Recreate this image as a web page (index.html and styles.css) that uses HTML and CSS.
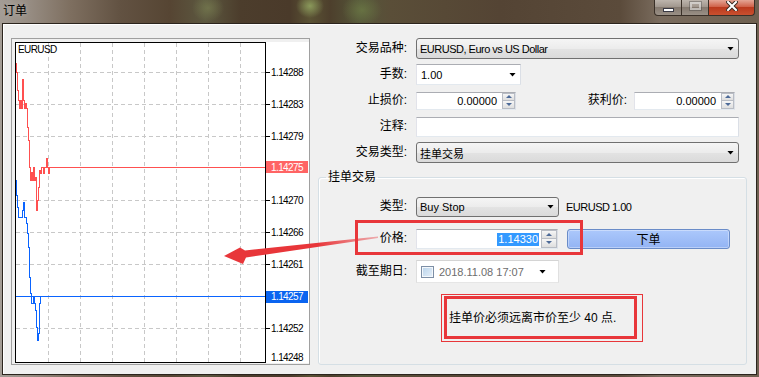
FILE: index.html
```html
<!DOCTYPE html>
<html lang="zh-CN">
<head>
  <meta charset="UTF-8">
  <title>订单</title>
  <link rel="stylesheet" href="styles.css">
</head>
<body>
<div class="window">
  <!-- 标题栏 -->
  <div class="titlebar">
    <span class="title">订单</span>
    <div class="controls">
      <span class="ctl ctl-min"><i></i></span>
      <span class="ctl ctl-max"><i></i></span>
      <span class="ctl ctl-close">
        <svg width="12" height="10" viewBox="0 0 12 10">
          <path d="M2 1 L10 9 M10 1 L2 9" stroke="#3a2a22" stroke-width="4" stroke-linecap="square"/>
          <path d="M2 1 L10 9 M10 1 L2 9" stroke="#fff" stroke-width="2" stroke-linecap="square"/>
        </svg>
      </span>
    </div>
  </div>

  <div class="client">
    <!-- 图表 -->
    <div class="chart-frame">
      <svg class="chart" viewBox="15 42 294 321" width="294" height="321" shape-rendering="crispEdges">
        <rect x="15" y="42" width="294" height="321" fill="#fff"/>
        <g class="grid" stroke="#c8c8c8" stroke-dasharray="4 3">
          <path d="M48.5 43V362 M80.5 43V362 M112.5 43V362 M144.5 43V362 M176.5 43V362 M208.5 43V362 M240.5 43V362"/>
          <path d="M16 72.5H265 M16 104.5H265 M16 136.5H265 M16 200.5H265 M16 232.5H265 M16 264.5H265 M16 328.5H265"/>
        </g>
        <rect x="15.5" y="42.5" width="250" height="320" fill="none" stroke="#000"/>
        <path d="M266 72.5h4 M266 104.5h4 M266 136.5h4 M266 167.5h4 M266 200.5h4 M266 232.5h4 M266 264.5h4 M266 296.5h4 M266 328.5h4" stroke="#000"/>

        <polyline fill="none" stroke="#ff5050" points="16.5,63 16.5,72.5 17.5,72.5 17.5,90.5 18.5,90.5 18.5,100.5 19.5,100.5 19.5,108.5 20.5,108.5 20.5,100.5 21.5,100.5 21.5,108.5 22.5,108.5 22.5,79.5 23.5,79.5 23.5,100.5 24.5,100.5 24.5,108.5 25.5,108.5 25.5,103.5 26.5,103.5 26.5,108.5 27.5,108.5 27.5,127.5 28.5,127.5 28.5,140.5 29.5,140.5 29.5,167.5 30.5,167.5 30.5,180.5 31.5,180.5 31.5,172.5 32.5,172.5 32.5,180.5 33.5,180.5 33.5,167.5 34.5,167.5 34.5,180.5 35.5,180.5 35.5,177.5 36.5,177.5 36.5,210.5 37.5,210.5 37.5,200.5 38.5,200.5 38.5,187.5 39.5,187.5 39.5,170.5 40.5,170.5 40.5,173.5 41.5,173.5 41.5,167.5 43.5,167.5 43.5,173.5 44.5,173.5 44.5,167.5 46.5,167.5 46.5,158.5 47.5,158.5 47.5,167.5 48.5,167.5 48.5,173.5 49.5,173.5 49.5,167.5"/>
        <rect x="49" y="167" width="216" height="1" fill="#ff5050"/>
        <polyline fill="none" stroke="#0a64ff" points="16.5,180 16.5,195.5 17.5,195.5 17.5,207.5 18.5,207.5 18.5,217.5 22.5,217.5 22.5,210.5 23.5,210.5 23.5,202.5 24.5,202.5 24.5,217.5 26.5,217.5 26.5,223.5 27.5,223.5 27.5,233.5 28.5,233.5 28.5,247.5 29.5,247.5 29.5,277.5 30.5,277.5 30.5,293.5 31.5,293.5 31.5,303.5 33.5,303.5 33.5,297.5 34.5,297.5 34.5,303.5 35.5,303.5 35.5,310.5 36.5,310.5 36.5,327.5 37.5,327.5 37.5,340.5 38.5,340.5 38.5,333.5 39.5,333.5 39.5,303.5 40.5,303.5 40.5,296.5"/>
        <rect x="16" y="296" width="249" height="1" fill="#0a64ff"/>

        <rect x="266" y="161" width="42" height="12" fill="#ff6464"/>
        <rect x="266" y="291" width="42" height="12" fill="#0a64f0"/>

        <g class="axis" font-family="Liberation Sans, sans-serif" font-size="10" letter-spacing="-0.6">
          <text x="18" y="53">EURUSD</text>
          <text x="271" y="76">1.14288</text>
          <text x="271" y="108">1.14283</text>
          <text x="271" y="140">1.14279</text>
          <text x="271" y="171" fill="#fff">1.14275</text>
          <text x="271" y="204">1.14270</text>
          <text x="271" y="236">1.14266</text>
          <text x="271" y="268">1.14261</text>
          <text x="271" y="300" fill="#fff">1.14257</text>
          <text x="271" y="332">1.14252</text>
          <text x="271" y="361">1.14248</text>
        </g>
      </svg>
    </div>

    <!-- 下单表单 -->
    <div class="order-form">
      <div class="rows">
        <span class="lbl">交易品种:</span>
        <div class="combo"><span class="tight">EURUSD, Euro vs US Dollar</span><i class="caret"></i></div>

        <span class="lbl">手数:</span>
        <div class="edit edit-lots"><span>1.00</span><i class="caret"></i></div>

        <span class="lbl">止损价:</span>
        <div class="pair">
          <div class="spin spin-sl">
            <span class="val">0.00000</span>
            <span class="spin-btns"><i class="up"></i><i class="down"></i></span>
          </div>
          <span class="lbl pair-lbl">获利价:</span>
          <div class="spin spin-tp">
            <span class="val">0.00000</span>
            <span class="spin-btns"><i class="up"></i><i class="down"></i></span>
          </div>
        </div>

        <span class="lbl">注释:</span>
        <div class="edit edit-comment"></div>

        <span class="lbl">交易类型:</span>
        <div class="combo"><span>挂单交易</span><i class="caret"></i></div>
      </div>

      <fieldset class="group">
        <legend>挂单交易</legend>
        <div class="rows rows-pending">
          <span class="lbl">类型:</span>
          <div class="inline">
            <div class="combo combo-short"><span>Buy Stop</span><i class="caret"></i></div>
            <span class="symbol tight">EURUSD 1.00</span>
          </div>

          <span class="lbl">价格:</span>
          <div class="inline">
            <div class="spin spin-price">
              <span class="val"><span class="sel">1.14330</span></span>
              <span class="spin-btns"><i class="up"></i><i class="down"></i></span>
            </div>
            <button class="place">下单</button>
          </div>

          <span class="lbl">截至期日:</span>
          <div class="inline">
            <div class="date">
              <i class="check"></i>
              <span class="date-text">2018.11.08 17:07</span>
              <i class="caret"></i>
            </div>
          </div>
        </div>
        <p class="note">挂单价必须远离市价至少 40 点.</p>
      </fieldset>
    </div>
  </div>

  <!-- 截图上的红色标注 -->
  <div class="mark mark-price"></div>
  <div class="mark mark-note"></div>
  <svg class="arrow" width="759" height="377" viewBox="0 0 759 377">
    <defs>
      <linearGradient id="fade" x1="224" y1="0" x2="380" y2="0" gradientUnits="userSpaceOnUse">
        <stop offset="0" stop-color="#e8363a"/>
        <stop offset="0.6" stop-color="#e8363a"/>
        <stop offset="1" stop-color="#e8363a" stop-opacity="0.35"/>
      </linearGradient>
    </defs>
    <polygon fill="url(#fade)" points="224,256 240,247.5 245,250.5 378,236.5 378,238 246,257.5 243,264"/>
  </svg>
</div>
</body>
</html>
```

FILE: styles.css
```css
/* 基础 */
* {
  box-sizing: border-box;
}
body {
  margin: 0;
  font-family: "Liberation Sans", "Noto Sans CJK SC", sans-serif;
  font-size: 11px;
  color: #000;
  background: #5a4a3a;
}

/* 窗口外框（Aero 玻璃效果） */
.window {
  position: relative;
  width: 759px;
  height: 377px;
  overflow: hidden;
  display: flex;
  flex-direction: column;
  background:
    radial-gradient(14px 12px at 310px 6px, rgba(150,170,100,0.8), transparent),
    radial-gradient(16px 14px at 208px 8px, rgba(120,125,80,0.7), transparent),
    radial-gradient(20px 16px at 362px 10px, rgba(110,125,70,0.7), transparent),
    linear-gradient(90deg, #a39c95 0, #968c82 30px, #7e6f60 70px, #625242 120px, #564533 170px, #5c5840 205px, #4c3d2c 240px, #4a3a2a 290px, #5a5234 310px, #4d3f2c 330px, #55563a 360px, #5a4e38 390px, #544434 500px, #5b4b3b 620px, #7a6c5e 660px, #6e6050 759px);
}

/* 标题栏 */
.titlebar {
  height: 23px;
  display: flex;
  align-items: flex-start;
}
.title {
  padding: 3px 0 0 3px;
  font-size: 12px;
  line-height: 16px;
  text-shadow: 0 0 6px rgba(255,255,255,0.35);
}
.controls {
  margin-left: auto;
  margin-right: 4px;
  display: flex;
}
.ctl {
  height: 16px;
  border: 1px solid #3a3028;
  border-top: 0;
  display: flex;
  align-items: center;
  justify-content: center;
  background: linear-gradient(#bdb5ad, #a1978e 45%, #857a70 50%, #9a9086);
}
.ctl-min {
  width: 28px;
  border-radius: 0 0 0 4px;
}
.ctl-min i {
  width: 11px;
  height: 4px;
  margin-top: 5px;
  background: #fff;
  border: 1px solid #3a3a44;
}
.ctl-max {
  width: 27px;
  border-left: 0;
}
.ctl-max i {
  width: 11px;
  height: 8px;
  margin-top: -4px;
  border: 2px solid rgba(235,235,235,0.55);
  outline: 1px solid rgba(60,60,60,0.35);
}
.ctl-close {
  width: 46px;
  border-left: 0;
  border-radius: 0 0 4px 0;
  background: linear-gradient(#e4a595, #d0624a 45%, #bb3a1e 50%, #c9502f);
}
.ctl-close svg {
  margin-top: -3px;
}

/* 客户区 */
.client {
  height: 352px;
  margin: 0 2px 2px;
  border: 1px solid #2b241d;
  background: #f0f0f0;
  box-shadow: inset 1px 1px 0 #fff;
  display: flex;
  align-items: flex-start;
}

/* 图表框 */
.chart-frame {
  margin: 14px 0 0 8px;
  border: 1px solid #a0a0a0;
  padding: 3px 0 1px 3px;
}
.chart {
  display: block;
}

/* 表单 */
.order-form {
  width: 429px;
  height: 100%;
  margin-left: 8px;
  padding: 14px 0 9px;
  display: flex;
  flex-direction: column;
}
.rows {
  display: grid;
  grid-template-columns: 89px 1fr;
  grid-auto-rows: 21px;
  column-gap: 9px;
  row-gap: 5px;
  align-items: center;
  padding-right: 8px;
}
.lbl {
  text-align: right;
  font-size: 12px;
  line-height: 21px;
  white-space: nowrap;
}
.tight {
  letter-spacing: -0.5px;
}

.caret {
  display: block;
  width: 7px;
  height: 4px;
  background: #000;
  clip-path: polygon(0 0, 100% 0, 50% 100%);
}

/* 只读下拉框 */
.combo {
  height: 21px;
  display: flex;
  align-items: center;
  justify-content: space-between;
  padding: 0 4px 0 3px;
  border: 1px solid #707070;
  border-radius: 3px;
  background: linear-gradient(#f5f5f5, #ececec 50%, #e3e3e3 51%, #dadada);
  font-size: 11px;
  white-space: nowrap;
}
.combo span {
  font-size: 11px;
}
.combo-short {
  width: 143px;
  height: 20px;
}

/* 编辑框 */
.edit {
  height: 20px;
  border: 1px solid;
  border-color: #abadb3 #dbdfe6 #e3e9ef #e2e3ea;
  background: #fff;
}
.edit-lots {
  width: 105px;
  height: 21px;
  display: flex;
  align-items: center;
  justify-content: space-between;
  padding: 0 4px 0 4px;
}

/* 数值框 */
.pair {
  display: flex;
  align-items: center;
  padding-right: 4px;
}
.pair-lbl {
  margin-left: auto;
  margin-right: 7px;
}
.spin {
  height: 18px;
  display: flex;
  border: 1px solid;
  border-color: #abadb3 #dbdfe6 #e3e9ef #e2e3ea;
  background: #fff;
}
.spin-sl {
  width: 100px;
}
.spin-tp {
  width: 101px;
}
.spin .val {
  flex: 1;
  text-align: right;
  padding-right: 5px;
  line-height: 16px;
}
.spin-btns {
  width: 13px;
  display: flex;
  flex-direction: column;
}
.spin-btns i {
  flex: 1;
  display: flex;
  align-items: center;
  justify-content: center;
  border: 1px solid #b8bcc4;
  background: linear-gradient(#f6f6f6, #dedede);
}
.spin-btns i + i {
  border-top: 0;
}
.spin-btns i::before {
  content: "";
  border-left: 3px solid transparent;
  border-right: 3px solid transparent;
}
.spin-btns .up::before {
  border-bottom: 3px solid #4d6a98;
}
.spin-btns .down::before {
  border-top: 3px solid #4d6a98;
}

/* 挂单分组 */
.group {
  flex: 1;
  margin: 6px 0 0;
  padding: 11px 0 0;
  border: 1px solid #d5dfe5;
  border-radius: 3px;
  box-shadow: inset 1px 1px 0 #fff;
  min-width: 0;
}
.group legend {
  margin-left: 7px;
  padding: 0 2px;
  font-size: 12px;
  line-height: 16px;
}
.rows-pending {
  grid-template-columns: 88px 1fr;
  grid-template-rows: 21px 21px 23px;
  row-gap: 11px;
  padding-right: 0;
}
.inline {
  display: flex;
  align-items: center;
}
.symbol {
  margin-left: 7px;
}
.spin-price {
  width: 142px;
  height: 20px;
}
.spin-price .val {
  padding-right: 2px;
  line-height: 18px;
}
.spin-price .spin-btns {
  width: 16px;
}
.sel {
  display: inline-block;
  padding: 0 1px;
  line-height: 13px;
  background: #3399ff;
  color: #fff;
}
.place {
  width: 163px;
  height: 20px;
  margin-left: 9px;
  padding: 0;
  border: 1px solid #6a8cc8;
  border-radius: 3px;
  background: linear-gradient(#acc8fb, #93b4f4);
  box-shadow: inset 0 0 0 1px rgba(255,255,255,0.35);
  font-family: "Noto Sans CJK SC", sans-serif;
  font-size: 12px;
  line-height: 16px;
  color: #000;
}

/* 日期选择 */
.date {
  width: 143px;
  height: 23px;
  display: flex;
  align-items: center;
  padding-left: 4px;
  border: 1px solid;
  border-color: #d4d4d4 #e0e0e0 #e6e6e6 #dedede;
  background: #fff;
}
.check {
  width: 13px;
  height: 12px;
  border: 1px solid #7d8fa6;
  background: linear-gradient(135deg, #b9d3ea, #e6f0fa);
  box-shadow: inset 0 0 0 1px #f4f8fc;
}
.date-text {
  margin-left: 5px;
  color: #6d6d6d;
}
.date .caret {
  margin-left: auto;
  margin-right: 12px;
}

.note {
  margin: 27px 0 0 130px;
  font-size: 12px;
  line-height: 16px;
}

/* 红色标注 */
.mark {
  position: absolute;
  border: 3px solid #e8363a;
  pointer-events: none;
}
.mark-price {
  left: 355px;
  top: 220px;
  width: 228px;
  height: 35px;
}
.mark-note {
  left: 444px;
  top: 296px;
  width: 193px;
  height: 43px;
}
.mark-note::before {
  content: "";
  position: absolute;
  left: -6px;
  top: -5px;
  width: 200px;
  height: 46px;
  border: 1px solid #e8363a;
}
.arrow {
  position: absolute;
  left: 0;
  top: 0;
  pointer-events: none;
}
```
